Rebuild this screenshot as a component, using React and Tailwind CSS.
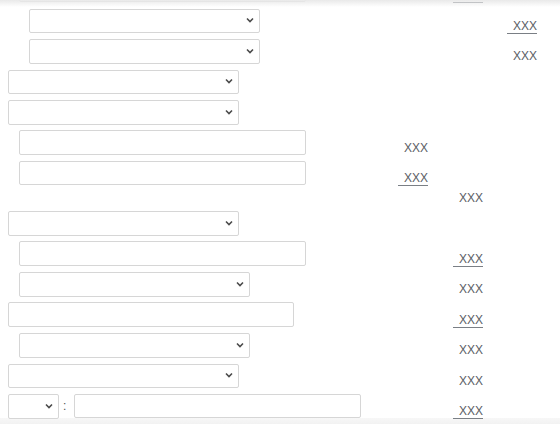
import React from 'react';

// Form rows: control on the left, short label on the right (some underlined)
const inputCls = 'h-full border border-[#d6d6d6] rounded-[2px] bg-white';

function Select({ className }) {
  return (
    <div className={`relative h-full ${className}`}>
      <select className={`${inputCls} w-full appearance-none text-[12px] text-[#333] px-2`}>
        <option></option>
      </select>
      <svg
        className="pointer-events-none absolute right-[6px] top-1/2 -translate-y-1/2"
        width="8"
        height="6"
        viewBox="0 0 8 6"
        fill="none"
      >
        <path d="M1 1.5 L4 4.5 L7 1.5" stroke="#4a4a4a" strokeWidth="1.6" />
      </svg>
    </div>
  );
}

function Input({ className }) {
  return <input type="text" className={`${inputCls} px-2 ${className}`} />;
}

function Label({ underline, text = 'XXX' }) {
  return (
    <span
      className={`inline-block w-[30px] h-[15px] shrink-0 translate-y-[1px] text-right text-[12px] leading-[14px] text-[#5b6066] ${
        underline ? 'border-b border-[#7a7f85]' : ''
      }`}
    >
      {text}
    </span>
  );
}

function Row({ lead, children, label, underline, text }) {
  return (
    <div className="flex items-end h-[24.5px] shrink-0">
      <div className="flex h-full shrink-0" style={{ width: lead }}>
        {children}
      </div>
      {label && <Label underline={underline} text={text} />}
    </div>
  );
}

export default function App() {
  return (
    <div
      className="relative h-[424px] w-[560px] overflow-hidden bg-white"
      style={{ fontFamily: '"Liberation Sans", Arial, sans-serif' }}
    >
      {/* bottom fade sits behind the rows */}
      <div className="pointer-events-none absolute left-0 right-0 bottom-0 h-[6px] bg-gradient-to-b from-[#f7f7f7] to-[#f2f2f2]" />

      <div className="relative flex flex-col gap-[6px] mt-[-22.5px]">
        {/* row cut off at the top */}
        <Row lead={453} label underline text="">
          <Input className="ml-[19px] w-[287px]" />
        </Row>

        <Row lead={507} label underline>
          <Select className="ml-[29px] w-[231px]" />
        </Row>
        <Row lead={507} label>
          <Select className="ml-[29px] w-[231px]" />
        </Row>
        <Row lead={300}>
          <Select className="ml-[8px] w-[231px]" />
        </Row>
        <Row lead={300}>
          <Select className="ml-[8px] w-[231px]" />
        </Row>
        <Row lead={398} label>
          <Input className="ml-[19px] w-[287px]" />
        </Row>
        <Row lead={398} label underline>
          <Input className="ml-[19px] w-[287px]" />
        </Row>

        <div className="flex h-[13.5px] items-center">
          <div className="w-[453px] shrink-0" />
          <Label />
        </div>

        <Row lead={300}>
          <Select className="ml-[8px] w-[231px]" />
        </Row>
        <Row lead={453} label underline>
          <Input className="ml-[19px] w-[287px]" />
        </Row>
        <Row lead={453} label>
          <Select className="ml-[19px] w-[231px]" />
        </Row>
        <Row lead={453} label underline>
          <Input className="ml-[8px] w-[286px]" />
        </Row>
        <Row lead={453} label>
          <Select className="ml-[19px] w-[231px]" />
        </Row>
        <Row lead={453} label>
          <Select className="ml-[8px] w-[231px]" />
        </Row>
        <Row lead={453} label underline>
          <div className="flex h-full items-center">
            <Select className="ml-[8px] w-[51px]" />
            <span className="mx-[4px] text-[12px] text-[#555]">:</span>
            <Input className="ml-[4px] w-[287px]" />
          </div>
        </Row>
      </div>

      {/* top fade */}
      <div className="pointer-events-none absolute left-0 right-0 top-0 h-[7px] bg-gradient-to-b from-[#e9e9e9] to-transparent" />
    </div>
  );
}
